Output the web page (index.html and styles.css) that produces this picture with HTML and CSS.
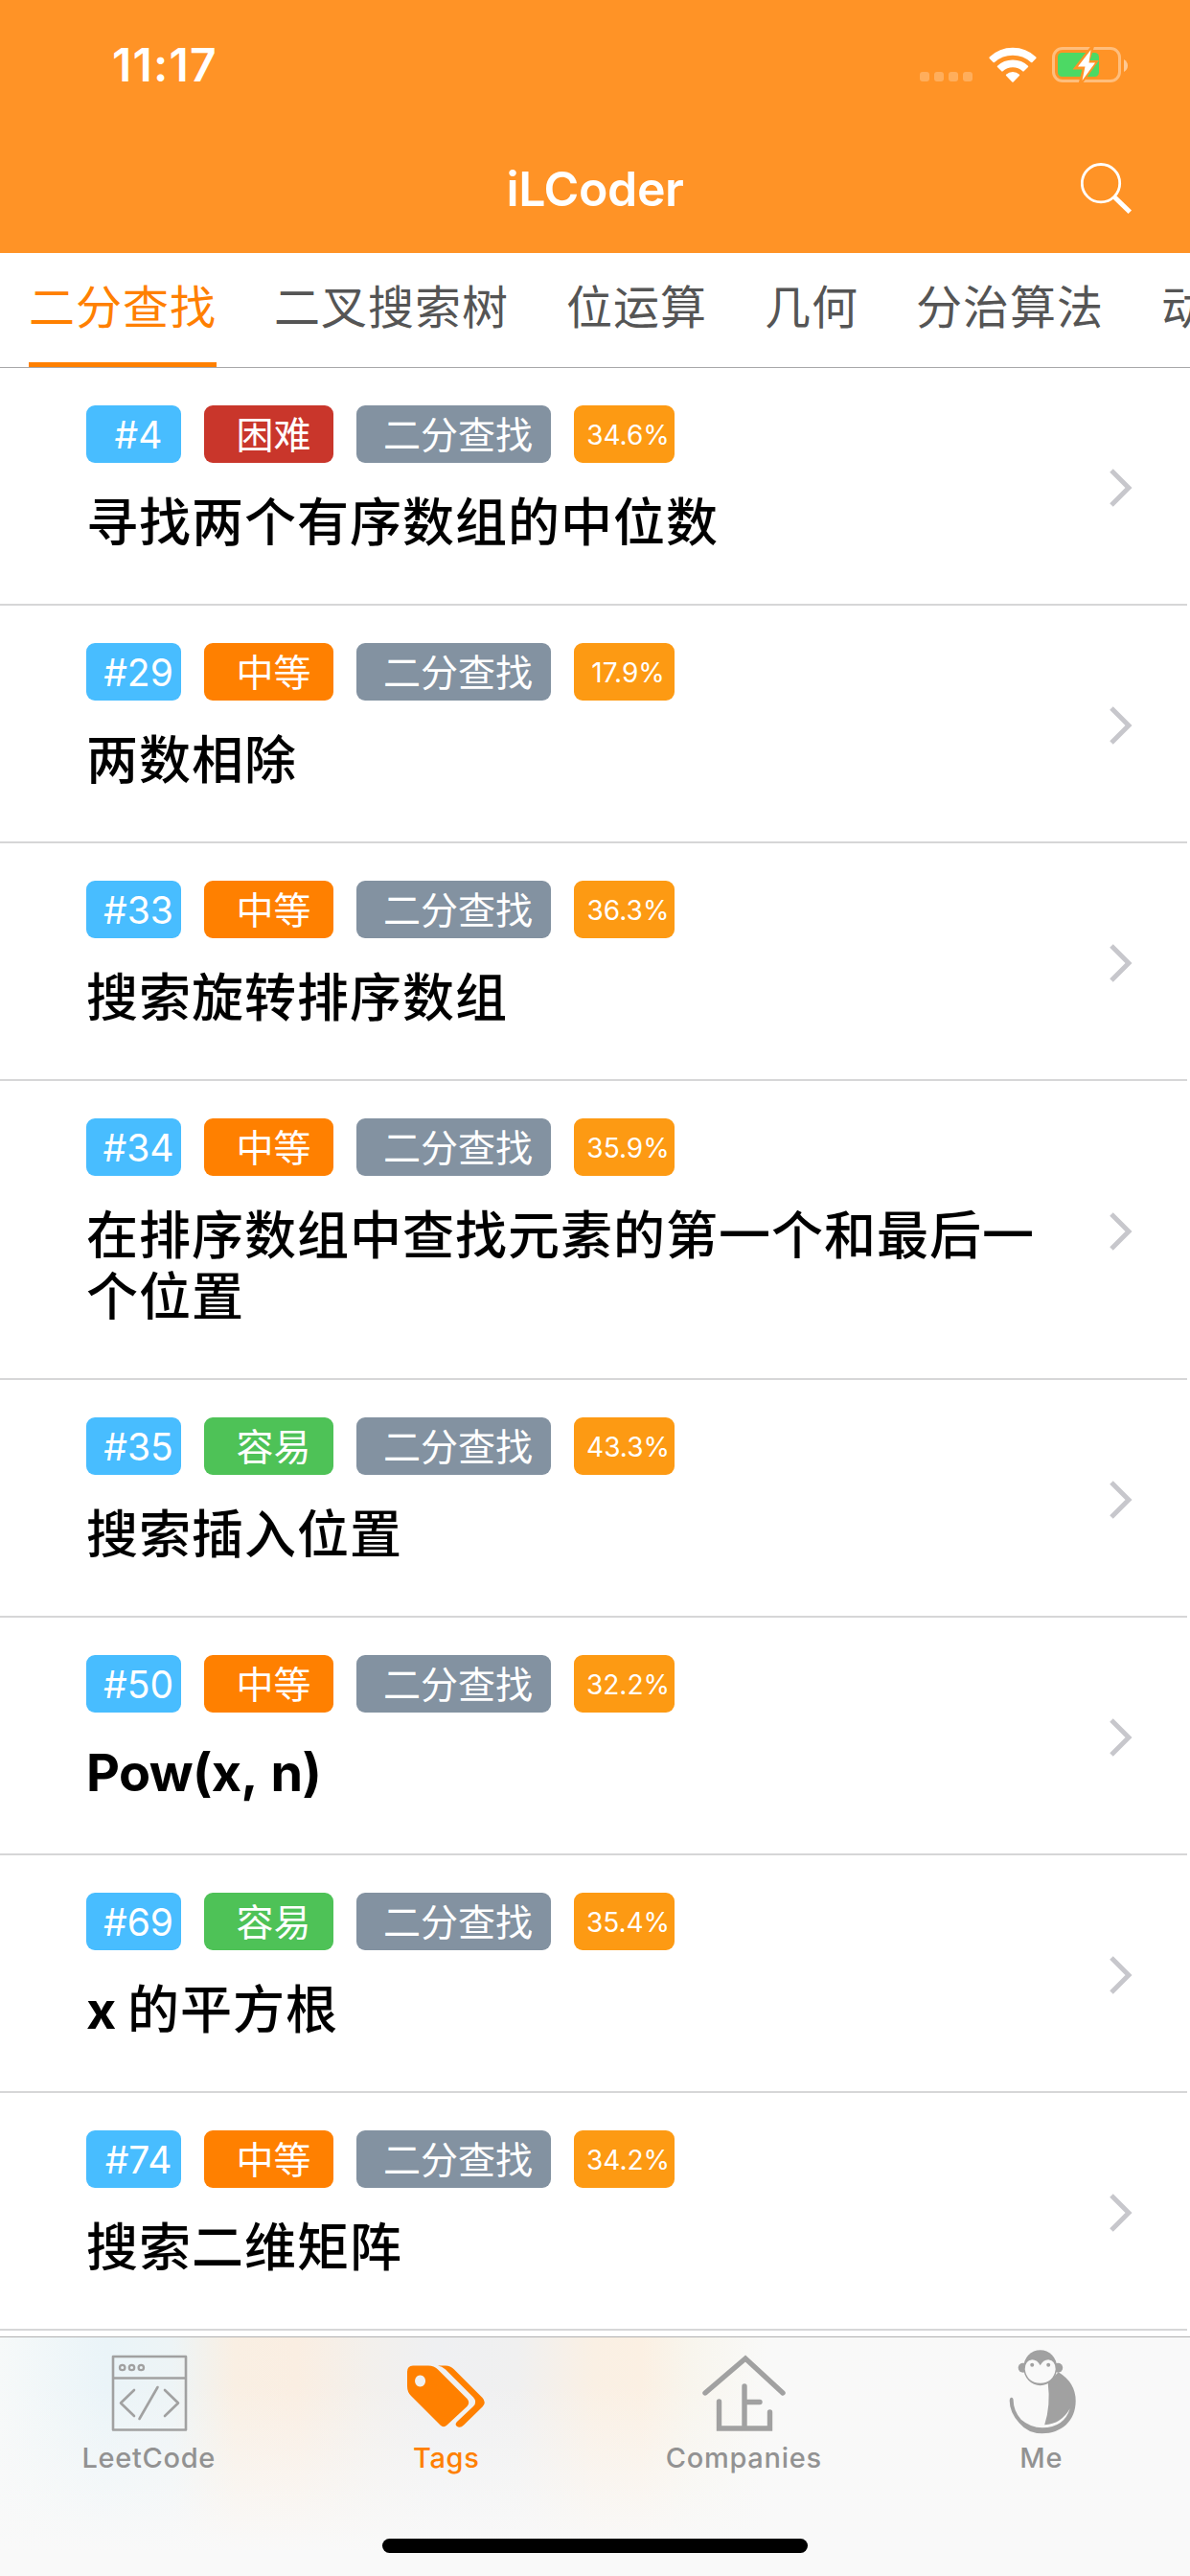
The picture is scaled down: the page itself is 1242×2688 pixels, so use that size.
FILE: index.html
```html
<!DOCTYPE html>
<html lang="zh-CN">
<head>
<meta charset="utf-8">
<title>iLCoder</title>
<link rel="stylesheet" href="styles.css">
</head>
<body>
<div class="app">
  <header class="header">
    <div class="status">
      <span class="clock">11:17</span>
      <div class="indicators">
        <svg class="signal" width="56" height="10" viewBox="0 0 56 10" fill="#fff" fill-opacity=".25"><rect width="10" height="10" rx="3"/><rect x="15" width="10" height="10" rx="3"/><rect x="30" width="10" height="10" rx="3"/><rect x="45" width="10" height="10" rx="3"/></svg>
        <svg class="wifi" width="50" height="37" viewBox="0 0 50 37" fill="#fff"><path d="M.7 10.4Q0 11.2.7 12L4.600 16.100Q5.300 16.600 6 16Q14 8.700 25 8.700T44 16Q44.700 16.600 45.400 16.100L49.300 12Q50 11.200 49.300 10.400Q39 .7 25 .7T.7 10.400Z"/><path d="M9 19.800Q8.400 20.500 9 21.100L13.300 25.300Q14 26 14.700 25.300Q19 21.300 25 21.300T35.300 25.300Q36 26 36.700 25.300L41 21.100Q41.600 20.500 41 19.800Q34.500 13.500 25 13.500T9 19.800Z"/><path d="M18 28.700Q17.600 29.400 18.100 30L24.300 36.400Q25 37 25.700 36.400L31.900 30Q32.400 29.400 32 28.700Q29 26 25 26T18 28.700Z"/></svg>
        <svg class="battery" width="80" height="40" viewBox="0 0 80 40"><rect x="1.500" y="2.500" width="69" height="34" rx="9.500" fill="none" stroke="#fff" stroke-opacity=".4" stroke-width="3"/><path d="M75 14V27Q79 24.500 79 20.500T75 14Z" fill="#fff" fill-opacity=".5"/><rect x="6" y="7" width="43" height="25" rx="4.500" fill="#4cd964"/><path d="M41-.5L21.500 24.500H31.500L27.500 39.500H31.500L49 15H39.500L44 .5Z" fill="#ff9326"/><path d="M40.500 4L27 21.500H34.500L31.500 36L45 17.500H38.500Z" fill="#fff"/></svg>
      </div>
    </div>
    <div class="nav">
      <h1>iLCoder</h1>
      <svg class="search" width="54" height="56" viewBox="0 0 54 56" fill="none" stroke="#fff"><circle cx="21" cy="22.200" r="19.700" stroke-width="2.800"/><path d="M35 36.500L51.300 52.300" stroke-width="5"/></svg>
    </div>
  </header>
  <nav class="tabs">
    <a class="tab active">二分查找</a><a class="tab">二叉搜索树</a><a class="tab">位运算</a><a class="tab">几何</a><a class="tab">分治算法</a><a class="tab">动态规划</a>
  </nav>
  <main class="list">
    <article class="row"><div class="body"><div class="badges"><span class="badge num">#4</span><span class="badge level hard">困难</span><span class="badge topic">二分查找</span><span class="badge rate">34.6%</span></div><h2>寻找两个有序数组的中位数</h2></div><svg class="chevron" viewBox="0 0 24 40"><path d="M2 2L20 20L2 38"/></svg></article>
    <article class="row"><div class="body"><div class="badges"><span class="badge num">#29</span><span class="badge level medium">中等</span><span class="badge topic">二分查找</span><span class="badge rate">17.9%</span></div><h2>两数相除</h2></div><svg class="chevron" viewBox="0 0 24 40"><path d="M2 2L20 20L2 38"/></svg></article>
    <article class="row"><div class="body"><div class="badges"><span class="badge num">#33</span><span class="badge level medium">中等</span><span class="badge topic">二分查找</span><span class="badge rate">36.3%</span></div><h2>搜索旋转排序数组</h2></div><svg class="chevron" viewBox="0 0 24 40"><path d="M2 2L20 20L2 38"/></svg></article>
    <article class="row"><div class="body"><div class="badges"><span class="badge num">#34</span><span class="badge level medium">中等</span><span class="badge topic">二分查找</span><span class="badge rate">35.9%</span></div><h2>在排序数组中查找元素的第一个和最后一个位置</h2></div><svg class="chevron" viewBox="0 0 24 40"><path d="M2 2L20 20L2 38"/></svg></article>
    <article class="row"><div class="body"><div class="badges"><span class="badge num">#35</span><span class="badge level easy">容易</span><span class="badge topic">二分查找</span><span class="badge rate">43.3%</span></div><h2>搜索插入位置</h2></div><svg class="chevron" viewBox="0 0 24 40"><path d="M2 2L20 20L2 38"/></svg></article>
    <article class="row"><div class="body"><div class="badges"><span class="badge num">#50</span><span class="badge level medium">中等</span><span class="badge topic">二分查找</span><span class="badge rate">32.2%</span></div><h2 class="latin">Pow(x, n)</h2></div><svg class="chevron" viewBox="0 0 24 40"><path d="M2 2L20 20L2 38"/></svg></article>
    <article class="row"><div class="body"><div class="badges"><span class="badge num">#69</span><span class="badge level easy">容易</span><span class="badge topic">二分查找</span><span class="badge rate">35.4%</span></div><h2><b>x </b>的平方根</h2></div><svg class="chevron" viewBox="0 0 24 40"><path d="M2 2L20 20L2 38"/></svg></article>
    <article class="row"><div class="body"><div class="badges"><span class="badge num">#74</span><span class="badge level medium">中等</span><span class="badge topic">二分查找</span><span class="badge rate">34.2%</span></div><h2>搜索二维矩阵</h2></div><svg class="chevron" viewBox="0 0 24 40"><path d="M2 2L20 20L2 38"/></svg></article>
  </main>
  <footer class="tabbar">
    <div class="items">
      <a class="item"><svg width="92" height="92" viewBox="-1 0 92 92" fill="none" stroke="#a1a1a1" stroke-width="2.600" stroke-linecap="round" stroke-linejoin="round"><path d="M8 8H84V84.500H8ZM8 30.500H84M30 43L16 56.500L30 70M54.500 40L35.500 73M62 43L76 56.500L62 70"/><g stroke-width="2.300"><circle cx="17.700" cy="19.500" r="2.700"/><circle cx="27.500" cy="19.500" r="2.700"/><circle cx="37.300" cy="19.500" r="2.700"/></g></svg><span>LeetCode</span></a>
      <a class="item active"><svg width="92" height="92" viewBox="0 0 92 92" fill="#ff8000"><path fill-rule="evenodd" d="M11 17.500H27Q33 17.500 37 21.500L67.500 52Q71 56 67.500 60L46.500 79.500Q43 83 39.500 79.500L9 49Q5 45 5 39V24Q5 17.500 11 17.500ZM18.500 27.500A5.500 6 0 1 0 18.600 27.500Z"/><path d="M37 17.500H45Q50 17.500 54 21.500L83.500 51Q88 56 83.500 60.500L64 79.500Q60 83.500 56.500 80.500Q54.500 78.500 57 76L74 60Q78.500 55.500 74 50.500L45 21.500Q41 18 37 17.500Z"/></svg><span>Tags</span></a>
      <a class="item"><svg width="92" height="92" viewBox="0 0 92 92" fill="none" stroke="#a1a1a1" stroke-width="5.400" stroke-linecap="round"><path d="M6 46L48 10L87 46M20.500 55V83H73.500V66M47 39V83M47 55.500H63"/></svg><span>Companies</span></a>
      <a class="item"><svg width="92" height="92" viewBox="-1.700 .800 92 92"><g fill="#a1a1a1"><ellipse cx="43" cy="20.500" rx="17.500" ry="18.500"/><circle cx="25" cy="20.500" r="5"/><circle cx="61.500" cy="20.500" r="5"/><path d="M62 25Q80 36 80 55C80 76 65 89 45 89Q30 89 21 78Q11 67 11 55Q11 51.500 13 51.500T15 55Q15 65 23 74.500Q33 83 45 83Q68 83 74 63Q65 79 47.500 80Q54 60 51 36Z"/></g><path d="M43 18Q40 12 34.500 12Q27 13 27 22Q29 36 43 36.500Q57 36 59 22Q59 13 51.500 12Q46 12 43 18Z" fill="#f9f9f9"/><g fill="#a1a1a1"><circle cx="34.500" cy="17.500" r="2"/><circle cx="51.500" cy="17.500" r="2"/></g></svg><span>Me</span></a>
    </div>
    <div class="home"></div>
  </footer>
</div>
</body>
</html>
```
FILE: styles.css
```css
* { box-sizing: border-box; }
body { margin: 0; background: #fff; font-family: Inter, "Noto Sans CJK SC", sans-serif; }
.app { width: 1242px; height: 2688px; display: flex; flex-direction: column; overflow: hidden; }
h1, h2 { margin: 0; }
svg { display: block; flex: none; }

.header { height: 264px; flex: none; background: #ff9326; color: #fff; }
.status { height: 132px; display: flex; justify-content: space-between; padding: 0 64px 0 117px; }
.clock { font-size: 48px; font-weight: 600; line-height: 60px; padding-top: 38px; letter-spacing: 1.2px; }
.indicators { display: flex; align-items: flex-start; }
.signal { margin: 75px 16px 0 0; }
.wifi { margin: 49px 16px 0 0; }
.battery { margin-top: 48px; }
.nav { height: 132px; display: grid; grid-template-columns: 1fr auto 1fr; align-items: start; padding-right: 60px; padding-left: 60px; }
h1 { grid-column: 2; font-size: 50px; font-weight: 600; line-height: 64px; padding-top: 33px; letter-spacing: -.4px; }
.search { justify-self: end; margin-top: 37px; }

.tabs { height: 120px; flex: none; display: flex; gap: 60px; padding-left: 30px; border-bottom: 1px solid #a8a8aa; overflow: hidden; }
.tab { flex: none; height: 119px; font-size: 48px; letter-spacing: 1px; line-height: 70px; padding-top: 22px; color: #555; border-bottom: 5px solid transparent; }
.tab.active { color: #ff8000; border-color: #ff8000; }

.list { flex: none; height: 2054px; overflow: hidden; }
.row { display: flex; align-items: center; justify-content: space-between; padding: 39px 57px 39px 90px; margin-right: 3px; border-bottom: 2px solid #d6d6d7; }
.body { width: 1005px; }
.badges { display: flex; gap: 24px; height: 60px; }
.badge { display: block; border-radius: 9px; color: #fff; font-size: 39px; line-height: 61px; text-align: center; padding-left: 10px; white-space: nowrap; }
.num { width: 99px; background: #48bdff; }
.level { width: 135px; }
.topic { width: 203px; background: #8392a1; padding-left: 9px; }
.rate { width: 105px; background: #fd9a13; font-size: 28px; line-height: 62px; padding-left: 8px; }
.hard { background: #c9362b; }
.medium { background: #ff8000; }
.easy { background: #4ec257; }
h2 { font-size: 54px; line-height: 64px; font-weight: 500; letter-spacing: 1px; margin-top: 31px; padding-bottom: 13px; color: #000; }
h2.latin, h2 b { font-weight: 700; letter-spacing: -.6px; }
h2.latin { word-spacing: 3px; }
.chevron { width: 24px; height: 40px; fill: none; stroke: #c7c7cc; stroke-width: 5; margin-top: 4px; }

.tabbar { flex: none; height: 250px; border-top: 1px solid #b0b0b0; display: flex; flex-direction: column; justify-content: space-between; align-items: center; padding-bottom: 24px;
  background:
    linear-gradient(to bottom, rgba(249,249,249,0) 20%, #f9f9f9 90%),
    linear-gradient(to right, #f6f9f9 0, #eaf4f8 110px, #edf4f6 180px, #f9efe3 245px, #faeee2 310px, #f3f0ec 385px, #eff0f2 455px, #f0f0f0 540px, #faf0e4 620px, #fbf0e3 670px, #f8f5ed 720px, #f9f9f8 800px, #f9f9f9 100%); }
.items { width: 100%; display: grid; grid-template-columns: repeat(4, 1fr); }
.item { display: flex; flex-direction: column; align-items: center; padding-top: 12px; color: #929292; font-size: 29px; font-weight: 500; line-height: 40px; letter-spacing: .7px; }
.item span { margin-top: 2px; }
.item.active { color: #ff8000; }
.home { width: 444px; height: 15px; border-radius: 8px; background: #000; }
```
